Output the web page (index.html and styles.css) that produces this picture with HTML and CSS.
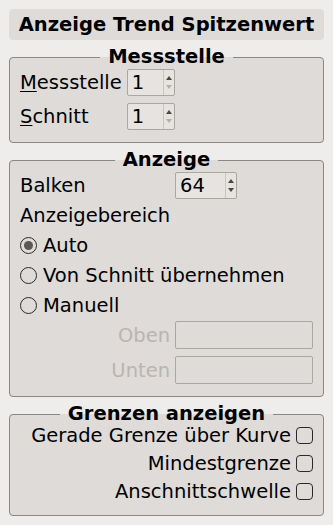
FILE: index.html
```html
<!DOCTYPE html>
<html lang="de">
<head>
    <meta charset="utf-8">
    <meta name="viewport" content="width=device-width, initial-scale=1.0">
    <title>Anzeige Trend Spitzenwert</title>
    <link rel="stylesheet" href="styles.css">
</head>
<body>
    <div class="title">Anzeige Trend Spitzenwert</div>

    <!-- Messstelle -->
    <fieldset class="group">
        <legend>Messstelle</legend>
        <div class="form-grid">
            <label><u>M</u>essstelle</label>
            <div class="spin narrow">
                <span class="value">1</span>
                <span class="arrows"><i class="up"></i><i class="down off"></i></span>
            </div>
            <label><u>S</u>chnitt</label>
            <div class="spin narrow">
                <span class="value">1</span>
                <span class="arrows"><i class="up"></i><i class="down off"></i></span>
            </div>
        </div>
    </fieldset>

    <!-- Anzeige -->
    <fieldset class="group">
        <legend>Anzeige</legend>
        <div class="display-grid">
            <label>Balken</label>
            <div class="spin wide">
                <span class="value">64</span>
                <span class="arrows"><i class="up"></i><i class="down"></i></span>
            </div>
            <div class="row full">Anzeigebereich</div>
            <div class="row full"><span class="radio checked"></span>Auto</div>
            <div class="row full"><span class="radio"></span>Von Schnitt übernehmen</div>
            <div class="row full"><span class="radio"></span>Manuell</div>
            <label class="disabled right">Oben</label>
            <div class="field"></div>
            <label class="disabled right lower">Unten</label>
            <div class="field lower"></div>
        </div>
    </fieldset>

    <!-- Grenzen anzeigen -->
    <fieldset class="group last">
        <legend>Grenzen anzeigen</legend>
        <div class="checks">
            <div class="check-row">Gerade Grenze über Kurve<span class="box"></span></div>
            <div class="check-row">Mindestgrenze<span class="box"></span></div>
            <div class="check-row">Anschnittschwelle<span class="box"></span></div>
        </div>
    </fieldset>
</body>
</html>
```

FILE: styles.css
```css
:root {
    --bg: #efedeb;
    --panel: #dfdbd8;
    --line: #8b8784;
    --field-line: #aaa6a2;
    --muted: #b9b5b1;
}

body {
    margin: 0;
    padding: 9px;
    background: var(--bg);
    font-family: 'DejaVu Sans', sans-serif;
    font-size: 19.5px;
    color: #000;
}

.title {
    height: 31px;
    line-height: 31px;
    text-align: center;
    font-weight: bold;
    background: var(--panel);
    border-radius: 4px;
}

.group {
    margin: 6px 0 0;
    min-width: 0;
    padding: 0 10px 12px;
    border: 1px solid var(--line);
    border-radius: 4px;
    background: var(--panel);
}

.group.last {
    padding-bottom: 10px;
}

.group legend {
    margin: 0 auto;
    padding: 0 8px;
    line-height: 22px;
    font-weight: bold;
}

u {
    text-decoration-thickness: 1px;
    text-underline-offset: 2px;
}

.form-grid {
    display: grid;
    grid-template-columns: auto 1fr;
    column-gap: 5px;
    row-gap: 7px;
    align-items: center;
    padding-top: 1px;
}

.display-grid {
    display: grid;
    grid-template-columns: 150px 1fr;
    column-gap: 5px;
    row-gap: 2px;
    align-items: center;
    padding-top: 1px;
}

.display-grid .full {
    grid-column: 1 / 3;
}

.row {
    height: 28px;
    display: flex;
    align-items: center;
}

.right {
    text-align: right;
}

.lower {
    margin-top: 5px;
}

.disabled {
    color: var(--muted);
}

/* Spinbox */
.spin {
    height: 27px;
    box-sizing: border-box;
    display: flex;
    border: 1px solid var(--field-line);
    border-radius: 2px;
    background: #e6e3e0;
}

.spin.narrow { width: 48px; }
.spin.wide { width: 62px; }

.spin .value {
    flex: 1;
    padding-left: 4px;
    line-height: 25px;
}

.spin .arrows {
    width: 10px;
    border-left: 1px solid #c9c5c1;
    display: flex;
    flex-direction: column;
    justify-content: space-around;
    align-items: center;
    padding: 3px 0;
}

.spin .arrows i {
    width: 0;
    height: 0;
    border-left: 3px solid transparent;
    border-right: 3px solid transparent;
}

.spin .arrows .up { border-bottom: 4px solid #4a4745; }
.spin .arrows .down { border-top: 4px solid #4a4745; }
.spin .arrows .down.off { border-top-color: #b3afab; }

.field {
    height: 28px;
    box-sizing: border-box;
    border: 1px solid var(--field-line);
    border-radius: 2px;
}

/* Radio */
.radio {
    width: 17px;
    height: 17px;
    box-sizing: border-box;
    border: 1.5px solid #2c2a29;
    border-radius: 50%;
    margin-right: 6px;
    display: flex;
    align-items: center;
    justify-content: center;
}

.radio.checked::after {
    content: '';
    width: 9px;
    height: 9px;
    border-radius: 50%;
    background: #5a5856;
}

/* Checkboxes */
.checks {
    margin-top: -4px;
}

.check-row {
    height: 28px;
    display: flex;
    align-items: center;
    justify-content: flex-end;
}

.check-row .box {
    width: 17px;
    height: 17px;
    box-sizing: border-box;
    border: 1.5px solid #2c2a29;
    border-radius: 4px;
    margin-left: 5px;
}
```
